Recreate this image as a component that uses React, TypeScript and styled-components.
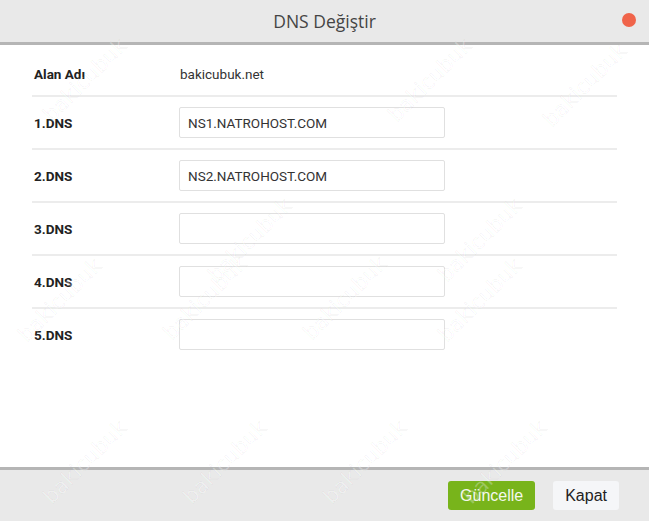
import styled, { createGlobalStyle } from "styled-components";

const GlobalStyle = createGlobalStyle`
  * { box-sizing: border-box; }
  html, body { margin: 0; padding: 0; background: #ffffff; }
  body { font-family: Roboto, "Liberation Sans", Arial, sans-serif; }
`;

const Dialog = styled.div`
  position: relative;
  width: 649px;
  height: 521px;
  display: flex;
  flex-direction: column;
  background: #ffffff;
  overflow: hidden;
`;

const Header = styled.div`
  height: 45px;
  display: grid;
  grid-template-columns: 1fr auto 1fr;
  align-items: center;
  background: #e9e9e9;
  border-bottom: 3px solid #b5b5b5;
`;

const Title = styled.h3`
  grid-column: 2;
  margin: 0;
  font-family: "Open Sans", sans-serif;
  font-size: 17.5px;
  font-weight: 500;
  color: #444444;
  padding-bottom: 1px;
`;

const CloseDot = styled.span`
  grid-column: 3;
  justify-self: end;
  width: 14px;
  height: 14px;
  margin-right: 13px;
  margin-bottom: 3px;
  border-radius: 50%;
  background: #f0644a;
`;

const Body = styled.div`
  flex: 1;
  padding: 8px 32px 0;
`;

const Row = styled.div<{ $last?: boolean }>`
  display: flex;
  align-items: center;
  padding: 10px 0 10px 2px;
  border-bottom: ${(p) => (p.$last ? "none" : "2px solid #ececec")};
`;

const Label = styled.div`
  width: 145px;
  font-size: 13.5px;
  font-weight: 700;
  color: #222222;
  line-height: 22px;
`;

const Value = styled.div`
  padding-left: 1px;
  font-size: 13.5px;
  color: #333333;
  line-height: 22px;
`;

const Input = styled.input`
  width: 266px;
  height: 31px;
  padding: 0 8px;
  border: 1px solid #e0e0e0;
  border-radius: 2px;
  font-family: Roboto, sans-serif;
  font-size: 13.5px;
  color: #333333;
  outline: none;
`;

const Footer = styled.div`
  height: 54px;
  display: flex;
  align-items: center;
  justify-content: flex-end;
  gap: 18px;
  padding: 0 30px 0 0;
  background: #e9e9e9;
  border-top: 3px solid #b5b5b5;
`;

const Button = styled.button<{ $primary?: boolean }>`
  height: 29px;
  padding: 0 12px;
  border: none;
  border-radius: 3px;
  font-family: "Liberation Sans", Arial, sans-serif;
  font-size: 16px;
  background: ${(p) => (p.$primary ? "#78b41b" : "#f5f6f8")};
  color: ${(p) => (p.$primary ? "#f4f8ee" : "#222222")};
  cursor: pointer;
`;

const Watermarks = styled.div`
  position: absolute;
  inset: 0;
  pointer-events: none;
`;

const Mark = styled.span<{ $x: number; $y: number }>`
  position: absolute;
  left: ${(p) => p.$x - 60}px;
  top: ${(p) => p.$y - 12}px;
  width: 120px;
  text-align: center;
  transform: rotate(-45deg);
  font-family: "DejaVu Sans", sans-serif;
  font-size: 21px;
  color: rgba(255, 255, 255, 0.3);
  -webkit-text-stroke: 0.6px rgba(0, 0, 0, 0.06);
`;

const marks: [number, number][] = [
  [85, 80], [430, 80], [585, 85],
  [250, 240], [480, 240],
  [60, 300], [205, 298], [345, 298], [480, 300],
  [85, 462], [225, 462], [365, 462], [505, 462],
];

const dnsRows = [
  { label: "1.DNS", value: "NS1.NATROHOST.COM" },
  { label: "2.DNS", value: "NS2.NATROHOST.COM" },
  { label: "3.DNS", value: "" },
  { label: "4.DNS", value: "" },
  { label: "5.DNS", value: "" },
];

export default function App() {
  return (
    <>
      <GlobalStyle />
      <Dialog>
        <Header>
          <Title>DNS Değiştir</Title>
          <CloseDot />
        </Header>
        <Body>
          <Row>
            <Label>Alan Adı</Label>
            <Value>bakicubuk.net</Value>
          </Row>
          {dnsRows.map((r, i) => (
            <Row key={r.label} $last={i === dnsRows.length - 1}>
              <Label>{r.label}</Label>
              <Input defaultValue={r.value} />
            </Row>
          ))}
        </Body>
        <Footer>
          <Button $primary>Güncelle</Button>
          <Button>Kapat</Button>
        </Footer>
        <Watermarks>
          {marks.map(([x, y], i) => (
            <Mark key={i} $x={x} $y={y}>
              bakicubuk
            </Mark>
          ))}
        </Watermarks>
      </Dialog>
    </>
  );
}
